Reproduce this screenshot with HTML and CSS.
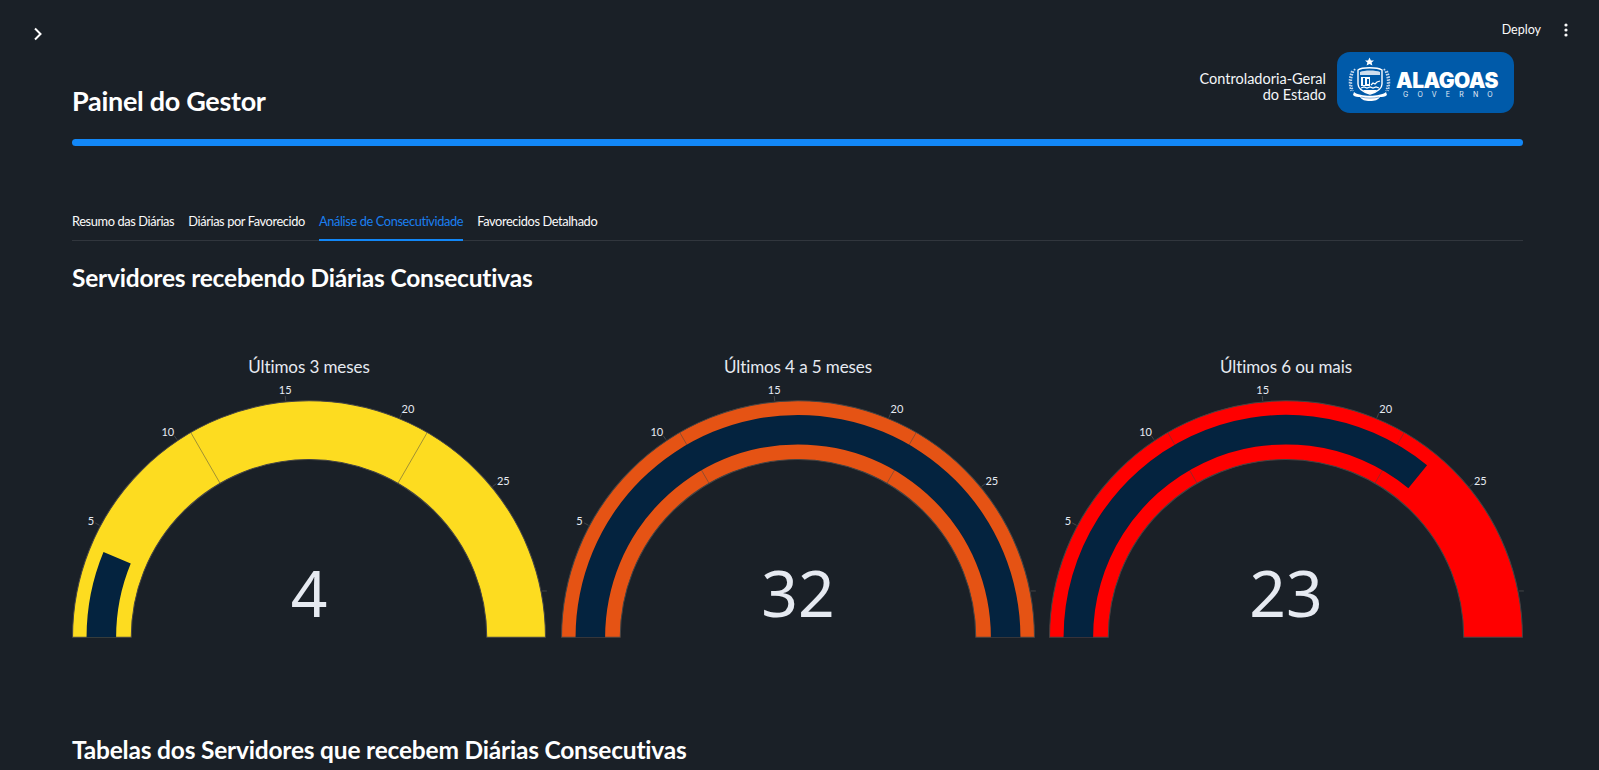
FILE: index.html
```html
<!DOCTYPE html>
<html lang="pt-BR">
<head>
<meta charset="utf-8">
<title>Painel do Gestor</title>
<link rel="stylesheet" href="styles.css">
</head>
<body>
<header class="toolbar">
  <svg class="chevron" viewBox="0 0 12 14"><path d="M3 1.5 8.5 7 3 12.5"/></svg>
  <div class="toolbar-right">
    <span class="deploy">Deploy</span>
    <svg class="kebab" viewBox="0 0 4 14"><circle cx="2" cy="2" r="1.6"/><circle cx="2" cy="7" r="1.6"/><circle cx="2" cy="12" r="1.6"/></svg>
  </div>
</header>
<main class="main">
  <div class="brand-row">
    <h1 class="page-title">Painel do Gestor</h1>
    <div class="brand">
      <div class="brand-text">Controladoria-Geral<br>do Estado</div>
      <svg class="logo" viewBox="0 0 177 61">
        <rect class="logo-bg" width="177" height="61" rx="13"/>
        <polygon class="logo-w" points="32.5,5.5 33.9,8.4 37,8.6 34.6,10.6 35.4,13.6 32.5,12 29.6,13.6 30.4,10.6 28,8.6 31.1,8.4"/>
        <path class="logo-line" d="M21 18c4-3 19-3 24 0v14c0 5-5 8-12 10-7-2-12-5-12-10z"/>
        <path class="logo-soft" d="M23 20c4-2 16-2 20 0v3H23z"/>
        <path class="logo-fill" d="M24 25h9v9h-9z"/>
        <path class="logo-dark" d="M26 26h2v7h-2zM30 27h2v5h-2z"/>
        <path class="logo-wave" d="M34 33l2-2 2 1 2-2 3-1M24 36l3-1 3 1 3-1 3 1 3-1 3 1"/>
        <path class="logo-fill" d="M26 38h14l-3 3h-8z"/>
        <path class="logo-wreath" stroke-dasharray="1.6 1.2" d="M18 17c-4 6-5 14-2 22M15 19c-3 6-3 13-1 20M47 17c4 6 5 14 2 22M50 19c3 6 3 13 1 20"/>
        <path class="logo-fill" d="M17 40c6 5 26 5 32 0l1 3c-2 2-5 2-7 2-2 3-5 4-10 4s-8-1-10-4c-2 0-5 0-7-2z"/>
        <path class="logo-dark-thin" d="M24 45c5 1.500 13 1.500 18 0"/>
        <text class="logo-name" x="59" y="36">ALAGOAS</text>
        <text class="logo-sub" x="66" y="45">GOVERNO</text>
      </svg>
    </div>
  </div>
  <div class="rule"></div>
  <nav class="tabs">
    <span class="tab">Resumo das Diárias</span>
    <span class="tab">Diárias por Favorecido</span>
    <span class="tab tab-active">Análise de Consecutividade</span>
    <span class="tab">Favorecidos Detalhado</span>
  </nav>
  <h2 class="section-title">Servidores recebendo Diárias Consecutivas</h2>
  <section class="gauges">
    <svg class="gauge gauge-yellow" viewBox="0 0 473 300">
      <text class="g-title" x="236.5" y="24">Últimos 3 meses</text>
      <path class="g-ticks" d="M27.5 176 23.1 173.6M104.8 90.6 102 86.5M213.3 51.8 212.8 46.9M327.2 68.7 329.1 64.1M419.7 137.3 423.6 134.2M468.9 241.5 473.9 241.5"/>
      <text class="g-tick" x="19" y="176">5</text><text class="g-tick" x="95.6" y="87">10</text><text class="g-tick" x="212.8" y="45">15</text><text class="g-tick" x="335.3" y="64">20</text><text class="g-tick" x="430.5" y="136">25</text>
      <path class="g-arc" d="M.5 287.7A236 236 0 0 1 472.5 287.7L413.9 287.7A177.4 177.4 0 0 0 59.1 287.7Z"/>
      <path class="g-div" d="M118.25 82.9 147.8 134.1M354.75 82.9 325.2 134.1"/>
      <path class="g-bar" d="M14.5 287.7A222 222 0 0 1 31.4 202.7L58.6 214A192.5 192.5 0 0 0 44 287.7Z"/>
      <text class="g-value" x="236.5" y="267.7">4</text>
    </svg>
    <svg class="gauge gauge-orange" viewBox="0 0 473 300">
      <text class="g-title" x="236.5" y="24">Últimos 4 a 5 meses</text>
      <path class="g-ticks" d="M27.5 176 23.1 173.6M104.8 90.6 102 86.5M213.3 51.8 212.8 46.9M327.2 68.7 329.1 64.1M419.7 137.3 423.6 134.2M468.9 241.5 473.9 241.5"/>
      <text class="g-tick" x="18.4" y="176">5</text><text class="g-tick" x="95.6" y="87">10</text><text class="g-tick" x="212.8" y="45">15</text><text class="g-tick" x="335.3" y="64">20</text><text class="g-tick" x="430" y="136">25</text>
      <path class="g-arc" d="M.5 287.7A236 236 0 0 1 472.5 287.7L413.9 287.7A177.4 177.4 0 0 0 59.1 287.7Z"/>
      <path class="g-div" d="M118.25 82.9 147.8 134.1M354.75 82.9 325.2 134.1"/>
      <path class="g-bar" d="M14.5 287.7A222 222 0 0 1 458.5 287.7L429 287.7A192.5 192.5 0 0 0 44 287.7Z"/>
      <text class="g-value" x="236.5" y="267.7">32</text>
    </svg>
    <svg class="gauge gauge-red" viewBox="0 0 473 300">
      <text class="g-title" x="236.5" y="24">Últimos 6 ou mais</text>
      <path class="g-ticks" d="M27.5 176 23.1 173.6M104.8 90.6 102 86.5M213.3 51.8 212.8 46.9M327.2 68.7 329.1 64.1M419.7 137.3 423.6 134.2M468.9 241.5 473.9 241.5"/>
      <text class="g-tick" x="19" y="176">5</text><text class="g-tick" x="96.3" y="87">10</text><text class="g-tick" x="213.3" y="45">15</text><text class="g-tick" x="336" y="64">20</text><text class="g-tick" x="430.5" y="136">25</text>
      <path class="g-arc" d="M.5 287.7A236 236 0 0 1 472.5 287.7L413.9 287.7A177.4 177.4 0 0 0 59.1 287.7Z"/>
      <path class="g-div" d="M118.25 82.9 147.8 134.1M354.75 82.9 325.2 134.1"/>
      <path class="g-bar" d="M14.5 287.7A222 222 0 0 1 377.3 116.1L358.6 138.9A192.5 192.5 0 0 0 44 287.7Z"/>
      <text class="g-value" x="236.5" y="267.7">23</text>
    </svg>
  </section>
  <h2 class="section-title section-title-2">Tabelas dos Servidores que recebem Diárias Consecutivas</h2>
</main>
</body>
</html>
```

FILE: styles.css
```css
* { box-sizing: border-box; }
html, body { height: 100%; }
body {
  margin: 0;
  height: 770px;
  overflow: hidden;
  background: #1a2027;
  color: #fff;
  font-family: Lato, "Noto Sans", sans-serif;
}
.toolbar {
  display: flex;
  justify-content: space-between;
  height: 0;
  padding: 0 31px 0 32px;
}
.chevron {
  width: 12px;
  height: 14px;
  margin-top: 27px;
  fill: none;
  stroke: #fff;
  stroke-width: 2;
}
.toolbar-right {
  display: flex;
  align-items: center;
  gap: 23px;
  height: 16px;
  margin-top: 22px;
}
.deploy { font-size: 12.5px; line-height: 16px; color: #fafafa; }
.kebab { width: 4px; height: 14px; fill: #fafafa; }
.main { padding: 52px 76px 0 72px; }
.brand-row {
  display: flex;
  justify-content: space-between;
  align-items: flex-start;
  height: 87px;
}
.page-title {
  margin: 31px 0 0;
  font-size: 27px;
  line-height: 36px;
  font-weight: 700;
  letter-spacing: -.3px;
}
.brand { display: flex; gap: 11px; margin-right: 9px; }
.brand-text {
  margin-top: 19px;
  text-align: right;
  font-size: 14.5px;
  line-height: 16px;
  color: #f4f6f8;
}
.logo { width: 177px; height: 61px; display: block; }
.logo-bg { fill: #005aa9; }
.logo-w, .logo-fill { fill: #fff; }
.logo-soft { fill: #cfdeee; }
.logo-dark { fill: #005aa9; }
.logo-dark-thin { fill: none; stroke: #6f9fcf; stroke-width: .8; }
.logo-wave { fill: none; stroke: #fff; stroke-width: 1.2; }
.logo-line { fill: none; stroke: #fff; stroke-width: 1.4; }
.logo-wreath { fill: none; stroke: #c3d7ec; stroke-width: 1.8; }
.logo-name {
  font-family: Inter, sans-serif;
  font-size: 21px;
  font-weight: 900;
  fill: #fff;
  letter-spacing: -.5px;
}
.logo-sub {
  font-family: Inter, sans-serif;
  font-size: 7px;
  fill: #e6eef7;
  letter-spacing: 9.2px;
}
.rule { height: 7px; border-radius: 4px; background: #1287f7; }
.tabs {
  display: flex;
  gap: 14px;
  margin-top: 58px;
  height: 37px;
  border-bottom: 1px solid #31363d;
}
.tab {
  height: 37px;
  padding-top: 8px;
  font-size: 12.8px;
  letter-spacing: -.38px;
  line-height: 18px;
  color: #fafafa;
}
.tab-active {
  color: #1a7ff0;
  border-bottom: 2px solid #1287f7;
}
.section-title {
  margin: 19px 0 0;
  font-size: 24.5px;
  letter-spacing: -.2px;
  line-height: 36px;
  font-weight: 700;
}
.section-title-2 { margin-top: 82px; }
.gauges {
  display: flex;
  gap: 14.5px;
  margin-top: 53px;
}
.gauge { width: 474px; height: 300.6px; flex: none; overflow: visible; }
.gauge-yellow .g-arc { fill: #fddc20; }
.gauge-orange .g-arc { fill: #e55314; }
.gauge-red .g-arc { fill: #ff0000; }
.g-arc { stroke: #444; stroke-width: 1; }
.g-div { fill: none; stroke: #444; stroke-width: .5; }
.g-ticks { fill: none; stroke: #555; stroke-width: .7; }
.g-bar { fill: #04233f; }
.g-title { font-size: 17px; letter-spacing: -.1px; fill: #e6eaf1; text-anchor: middle; }
.g-tick { font-size: 11px; fill: #e6eaf1; text-anchor: middle; }
.g-value {
  font-family: "Noto Sans", sans-serif;
  font-size: 64px;
  fill: #e6eaf1;
  text-anchor: middle;
}
```
